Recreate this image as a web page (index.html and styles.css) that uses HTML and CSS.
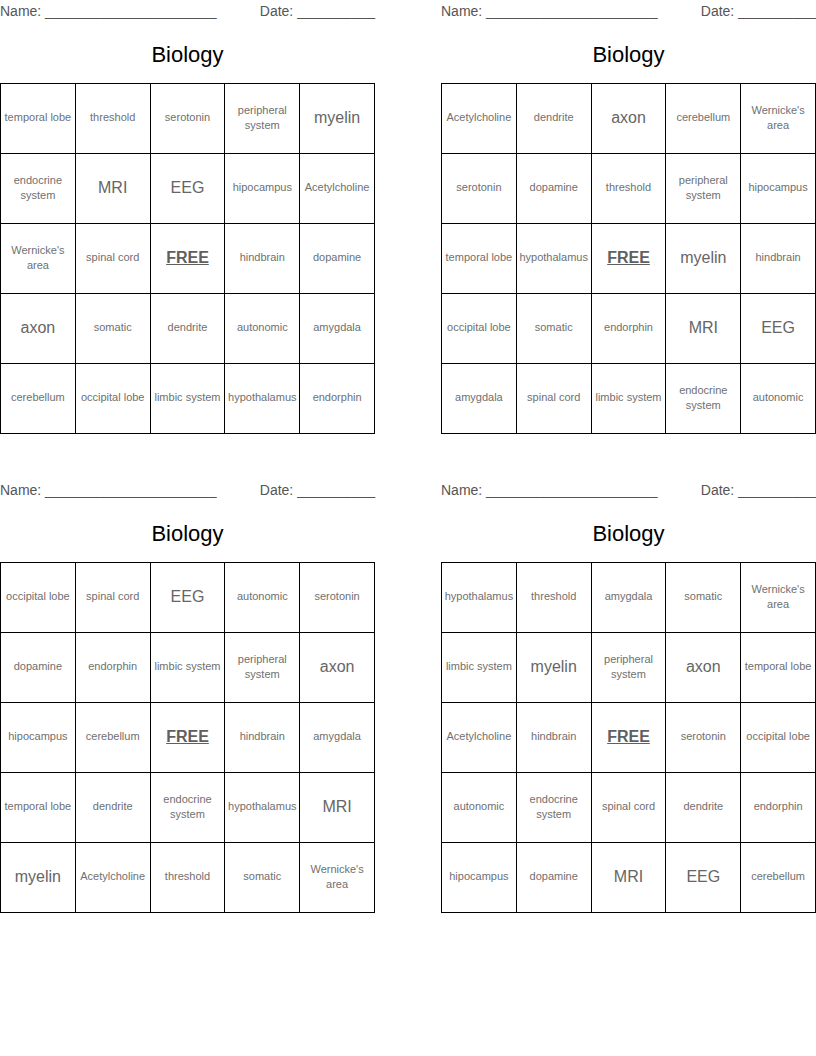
FILE: index.html
```html
<!DOCTYPE html>
<html>
<head>
<meta charset="utf-8">
<link rel="stylesheet" href="styles.css">
</head>
<body>
<div class="sheet">
  <section class="card">
    <div class="meta"><span>Name: ______________________</span><span>Date: __________</span></div>
    <h1 class="title">Biology</h1>
    <div class="board">
      <div class="cell">temporal lobe</div><div class="cell">threshold</div><div class="cell">serotonin</div><div class="cell">peripheral system</div><div class="cell big">myelin</div>
      <div class="cell">endocrine system</div><div class="cell big">MRI</div><div class="cell big">EEG</div><div class="cell">hipocampus</div><div class="cell">Acetylcholine</div>
      <div class="cell">Wernicke's area</div><div class="cell">spinal cord</div><div class="cell free">FREE</div><div class="cell">hindbrain</div><div class="cell">dopamine</div>
      <div class="cell big">axon</div><div class="cell">somatic</div><div class="cell">dendrite</div><div class="cell">autonomic</div><div class="cell">amygdala</div>
      <div class="cell">cerebellum</div><div class="cell">occipital lobe</div><div class="cell">limbic system</div><div class="cell">hypothalamus</div><div class="cell">endorphin</div>
    </div>
  </section>
  <section class="card">
    <div class="meta"><span>Name: ______________________</span><span>Date: __________</span></div>
    <h1 class="title">Biology</h1>
    <div class="board">
      <div class="cell">Acetylcholine</div><div class="cell">dendrite</div><div class="cell big">axon</div><div class="cell">cerebellum</div><div class="cell">Wernicke's area</div>
      <div class="cell">serotonin</div><div class="cell">dopamine</div><div class="cell">threshold</div><div class="cell">peripheral system</div><div class="cell">hipocampus</div>
      <div class="cell">temporal lobe</div><div class="cell">hypothalamus</div><div class="cell free">FREE</div><div class="cell big">myelin</div><div class="cell">hindbrain</div>
      <div class="cell">occipital lobe</div><div class="cell">somatic</div><div class="cell">endorphin</div><div class="cell big">MRI</div><div class="cell big">EEG</div>
      <div class="cell">amygdala</div><div class="cell">spinal cord</div><div class="cell">limbic system</div><div class="cell">endocrine system</div><div class="cell">autonomic</div>
    </div>
  </section>
  <section class="card">
    <div class="meta"><span>Name: ______________________</span><span>Date: __________</span></div>
    <h1 class="title">Biology</h1>
    <div class="board">
      <div class="cell">occipital lobe</div><div class="cell">spinal cord</div><div class="cell big">EEG</div><div class="cell">autonomic</div><div class="cell">serotonin</div>
      <div class="cell">dopamine</div><div class="cell">endorphin</div><div class="cell">limbic system</div><div class="cell">peripheral system</div><div class="cell big">axon</div>
      <div class="cell">hipocampus</div><div class="cell">cerebellum</div><div class="cell free">FREE</div><div class="cell">hindbrain</div><div class="cell">amygdala</div>
      <div class="cell">temporal lobe</div><div class="cell">dendrite</div><div class="cell">endocrine system</div><div class="cell">hypothalamus</div><div class="cell big">MRI</div>
      <div class="cell big">myelin</div><div class="cell">Acetylcholine</div><div class="cell">threshold</div><div class="cell">somatic</div><div class="cell">Wernicke's area</div>
    </div>
  </section>
  <section class="card">
    <div class="meta"><span>Name: ______________________</span><span>Date: __________</span></div>
    <h1 class="title">Biology</h1>
    <div class="board">
      <div class="cell">hypothalamus</div><div class="cell">threshold</div><div class="cell">amygdala</div><div class="cell">somatic</div><div class="cell">Wernicke's area</div>
      <div class="cell">limbic system</div><div class="cell big">myelin</div><div class="cell">peripheral system</div><div class="cell big">axon</div><div class="cell">temporal lobe</div>
      <div class="cell">Acetylcholine</div><div class="cell">hindbrain</div><div class="cell free">FREE</div><div class="cell">serotonin</div><div class="cell">occipital lobe</div>
      <div class="cell">autonomic</div><div class="cell">endocrine system</div><div class="cell">spinal cord</div><div class="cell">dendrite</div><div class="cell">endorphin</div>
      <div class="cell">hipocampus</div><div class="cell">dopamine</div><div class="cell big">MRI</div><div class="cell big">EEG</div><div class="cell">cerebellum</div>
    </div>
  </section>
</div>
</body>
</html>
```

FILE: styles.css
```css
html, body {
  margin: 0;
  padding: 0;
  background: #fff;
}
body {
  font-family: "Liberation Sans", Arial, sans-serif;
}
.sheet {
  display: grid;
  grid-template-columns: 375px 375px;
  column-gap: 66px;
  grid-auto-rows: 479px;
}
.card {
  display: flex;
  flex-direction: column;
}
.meta {
  display: flex;
  justify-content: space-between;
  padding-top: 1px;
  font-size: 14px;
  line-height: 20px;
  color: #555;
  white-space: pre;
}
.title {
  margin: 21px 0 0 0;
  font-size: 22px;
  font-weight: normal;
  line-height: 26px;
  text-align: center;
  color: #000;
}
.board {
  margin-top: 15px;
  width: 375px;
  box-sizing: border-box;
  display: grid;
  grid-template-columns: repeat(5, 1fr);
  grid-auto-rows: 70px;
  border-top: 1px solid #000;
  border-left: 1px solid #000;
}
.cell {
  box-sizing: border-box;
  border-right: 1px solid #000;
  border-bottom: 1px solid #000;
  display: flex;
  align-items: center;
  justify-content: center;
  text-align: center;
  font-size: 11px;
  line-height: 15px;
  color: #707070;
  padding: 0 1px 2px;
}
.cell.big {
  font-size: 16px;
  color: #666;
}
.cell.free {
  font-size: 16px;
  font-weight: bold;
  text-decoration: underline;
  color: #606060;
}
```
